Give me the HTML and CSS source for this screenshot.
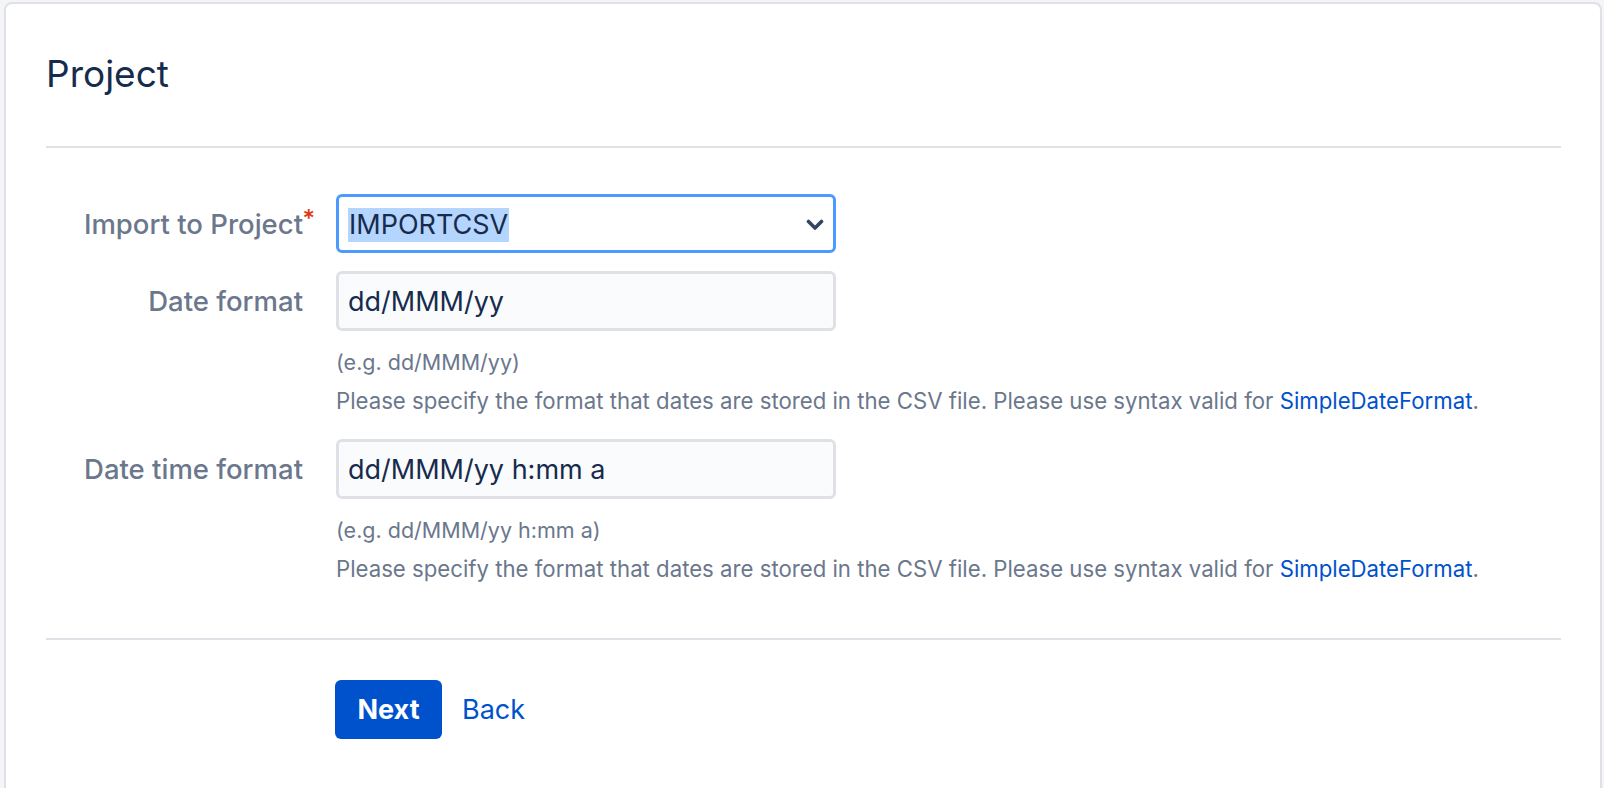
FILE: index.html
```html
<!DOCTYPE html>
<html lang="en">
<head>
<meta charset="utf-8">
<title>Project</title>
<link rel="stylesheet" href="styles.css">
</head>
<body>
<div class="card">
  <h2 class="title">Project</h2>
  <hr class="divider">
  <form class="form">
    <div class="row">
      <label class="label">Import to Project<span class="req">*</span></label>
      <div class="field">
        <div class="select">
          <span class="sel-text">IMPORTCSV</span>
          <svg class="chev" width="18" height="12" viewBox="0 0 18 12"><path d="M2.5 2.5 L9 9 L15.5 2.5" fill="none" stroke="#344563" stroke-width="3.6" stroke-linecap="round" stroke-linejoin="round"/></svg>
        </div>
      </div>
    </div>
    <div class="row">
      <label class="label">Date format</label>
      <div class="field">
        <div class="input">dd/MMM/yy</div>
        <div class="example">(e.g. dd/MMM/yy)</div>
        <div class="desc">Please specify the format that dates are stored in the CSV file. Please use syntax valid for <a class="link" href="#">SimpleDateFormat</a>.</div>
      </div>
    </div>
    <div class="row">
      <label class="label">Date time format</label>
      <div class="field">
        <div class="input">dd/MMM/yy h:mm a</div>
        <div class="example">(e.g. dd/MMM/yy h:mm a)</div>
        <div class="desc">Please specify the format that dates are stored in the CSV file. Please use syntax valid for <a class="link" href="#">SimpleDateFormat</a>.</div>
      </div>
    </div>
  </form>
  <hr class="divider">
  <div class="actions">
    <button class="btn" type="button">Next</button>
    <a class="back" href="#">Back</a>
  </div>
</div>
</body>
</html>
```
FILE: styles.css
```css
html, body {
  margin: 0;
  padding: 0;
  background: #f4f5f7;
  font-family: Inter, "Noto Sans", sans-serif;
}
.card {
  margin: 2px 2px 0 4px;
  height: 800px;
  box-sizing: border-box;
  background: #fff;
  border: 2px solid #dfe1e6;
  border-radius: 8px;
  padding: 47px 39px 0 40px;
}
.title {
  margin: 0;
  font-size: 37px;
  font-weight: 400;
  color: #172b4d;
  line-height: 46px;
}
.divider {
  margin: 0;
  border: 0;
  height: 2px;
  background: #dfe1e6;
}
.title + .divider {
  margin-top: 49px;
}
.form {
  padding-top: 46px;
  padding-bottom: 56px;
}
.row {
  display: grid;
  grid-template-columns: 257px 1fr;
  column-gap: 33px;
  margin-bottom: 18px;
}
.row + .row + .row {
  margin-top: 25px;
}
.row:last-child { margin-bottom: 0; }
.label {
  position: relative;
  text-align: right;
  font-size: 27.5px;
  line-height: 34px;
  padding-top: 13px;
  color: #6b778c;
  font-weight: 500;
}
.req {
  position: absolute;
  right: -12px;
  top: 8px;
  color: #de350b;
  font-size: 24px;
}
.select {
  width: 500px;
  height: 59px;
  box-sizing: border-box;
  border: 3px solid #4c9aff;
  border-radius: 6px;
  display: flex;
  align-items: center;
  justify-content: space-between;
  padding: 2px 9px 0 9px;
  background: #fff;
}
.sel-text {
  background: #b4d5fe;
  font-size: 27px;
  line-height: 34px;
  color: #172b4d;
  padding: 0 1px;
}
.input {
  width: 500px;
  height: 60px;
  box-sizing: border-box;
  border: 3px solid #dfe1e6;
  border-radius: 6px;
  background: #fafbfc;
  display: flex;
  align-items: center;
  padding: 0 9px;
  font-size: 27px;
  color: #172b4d;
}
.example {
  margin-top: 18px;
  font-size: 21.5px;
  line-height: 26px;
  color: #6b778c;
}
.desc {
  margin-top: 13px;
  font-size: 22.2px;
  line-height: 26px;
  color: #6b778c;
}
.link, .back {
  color: #0052cc;
  text-decoration: none;
}
.actions {
  display: flex;
  align-items: center;
  gap: 20px;
  padding: 40px 0 0 289px;
}
.btn {
  width: 107px;
  height: 59px;
  border: 0;
  border-radius: 6px;
  background: #0052cc;
  color: #fff;
  font-family: inherit;
  font-size: 27px;
  font-weight: 700;
}
.back {
  font-size: 27px;
}
```
